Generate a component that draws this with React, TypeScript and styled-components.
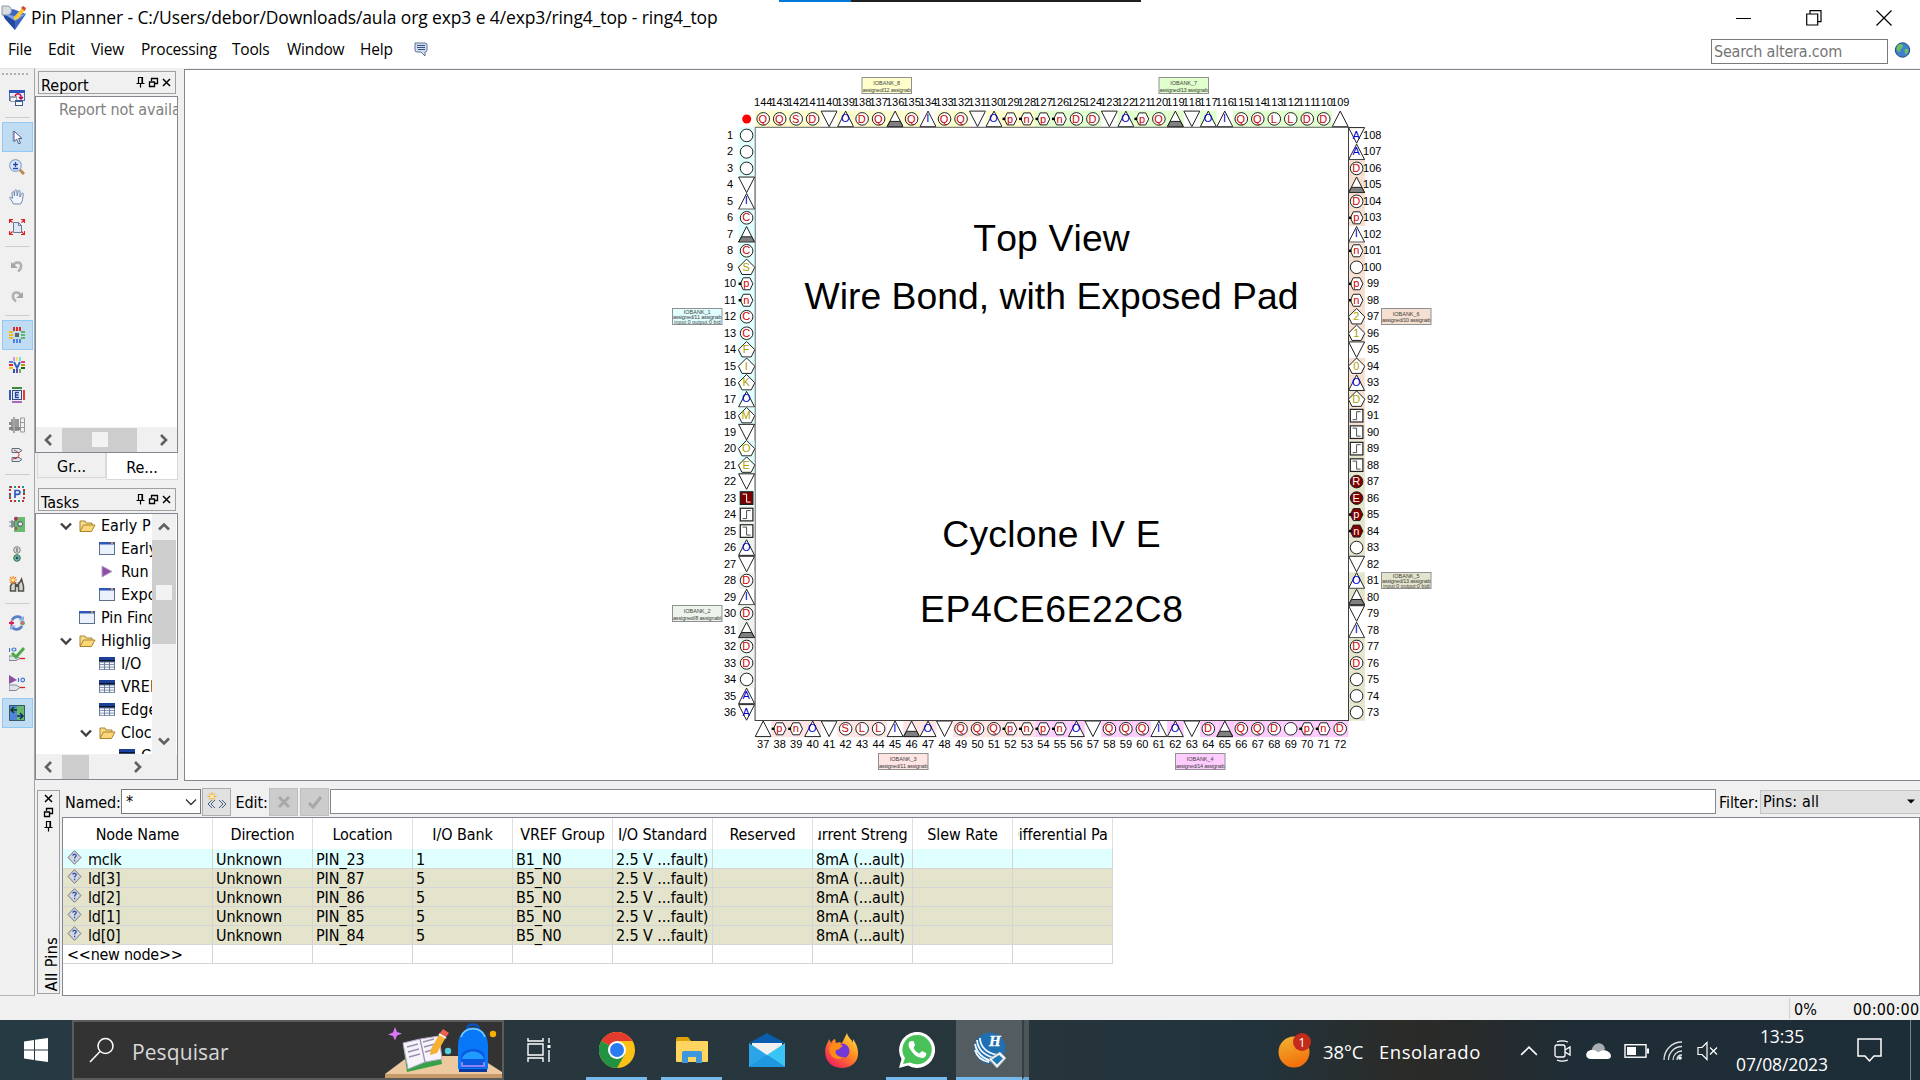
import React from "react";
import styled, { createGlobalStyle, css } from "styled-components";

const Global = createGlobalStyle`
  *, *::before, *::after { box-sizing: border-box; }
  body { margin: 0; background: #fff; overflow: hidden; }
`;

const TAHOMA = `"DejaVu Sans Condensed", "DejaVu Sans", sans-serif`;
const segoe = css`
  font-family: "Open Sans", "Noto Sans", sans-serif;
  font-stretch: normal;
`;

const Screen = styled.div`
  width: 1920px;
  height: 1080px;
  display: flex;
  flex-direction: column;
  background: #fff;
  color: #000;
  font: 16px/19px ${TAHOMA};
  font-stretch: condensed;
  letter-spacing: -0.1px;
  white-space: nowrap;
  overflow: hidden;
`;

/* ---------- title and menu ---------- */
const TopStrip = styled.div`
  height: 2px;
  display: flex;
  padding-left: 779px;
  flex: none;
`;
const StripPart = styled.div<{ $w: number; $c: string }>`
  width: ${(p) => p.$w}px;
  background: ${(p) => p.$c};
`;
const TitleBar = styled.div`
  height: 33px;
  flex: none;
  display: flex;
  align-items: center;
  padding: 0 28px 2px 0;
  ${segoe}
  font-size: 17.5px;
`;
const TitleText = styled.span`
  margin-left: 3px;
  letter-spacing: -0.12px;
  flex: 1;
`;
const WindowControls = styled.div`
  display: flex;
  gap: 54px;
`;
const MenuBar = styled.div`
  height: 33px;
  flex: none;
  display: flex;
  align-items: center;
  padding: 0 9px 5px 8px;
  ${segoe}
  font-size: 15.5px;
  letter-spacing: -0.2px;
`;
const MenuItem = styled.span<{ $w: number }>`
  width: ${(p) => p.$w}px;
  flex: none;
`;
const SearchBox = styled.div`
  margin: 4px 6px 0 auto;
  width: 177px;
  height: 25px;
  border: 1px solid #7a7a7a;
  padding: 2px 2px;
  color: #757575;
  font: 16px/19px ${TAHOMA};
  font-stretch: condensed;
`;

/* ---------- work area ---------- */
const Main = styled.div`
  height: 928px;
  flex: none;
  display: flex;
  background: #f0f0f0;
`;
const Toolbar = styled.div`
  width: 35px;
  border-right: 1px solid #a5a5a5;
  border-bottom: 1px solid #b5b5b5;
  border-top: 1px solid #e4e4e4;
  display: flex;
  flex-direction: column;
  align-items: center;
`;
const Grip = styled.div`
  width: 26px;
  height: 2px;
  margin: 4px 4px 8px 0;
  background: repeating-linear-gradient(90deg, #b0b0b0 0 2px, transparent 2px 4px);
`;
const ToolButton = styled.div<{ $on?: boolean }>`
  width: 31px;
  height: 30px;
  display: grid;
  place-items: center;
  flex: none;
  ${(p) => p.$on && css`
    background: #c0dcf3;
    border: 1px solid #90c8f6;
  `}
`;
const ToolRule = styled.div`
  width: 25px;
  height: 1px;
  background: #cdcdcd;
  margin: 4px 0;
  flex: none;
`;
const Right = styled.div`
  flex: 1;
  min-width: 0;
  display: flex;
  flex-direction: column;
`;
const Upper = styled.div`
  height: 713px;
  flex: none;
  display: flex;
  padding-top: 1px;
`;
const Side = styled.div`
  width: 149px;
  flex: none;
  display: flex;
  flex-direction: column;
`;
const PanelTitle = styled.div`
  width: 138px;
  height: 23px;
  margin: 2px 0 2px 3px;
  border: 1px solid #a0a0a0;
  display: flex;
  align-items: center;
  padding: 0 2px 0 2px;
  flex: none;
`;
const PanelName = styled.span`
  flex: 1;
  padding-top: 5px;
  letter-spacing: 0;
`;
const PanelBox = styled.div<{ $h: number }>`
  width: 143px;
  height: ${(p) => p.$h}px;
  flex: none;
  border: 1px solid #828790;
  background: #fff;
  display: flex;
  flex-direction: column;
  overflow: hidden;
`;
const ReportText = styled.div`
  flex: 1;
  padding: 3px 0 0 23px;
  color: #808080;
  overflow: hidden;
`;
const HScroll = styled.div`
  height: 25px;
  flex: none;
  background: #f0f0f0;
  display: flex;
  align-items: center;
`;
const ArrowCell = styled.div<{ $w: number }>`
  width: ${(p) => p.$w}px;
  display: grid;
  place-items: center;
`;
const HThumb = styled.div<{ $w: number; $gap: number }>`
  width: ${(p) => p.$w}px;
  margin-right: ${(p) => p.$gap}px;
  height: 24px;
  background: #cdcdcd;
  display: grid;
  place-items: center;
`;
const ThumbGrip = styled.div`
  width: 16px;
  height: 15px;
  background: #f2f2f2;
`;
const Tabs = styled.div`
  height: 33px;
  width: 143px;
  flex: none;
  display: flex;
  padding-left: 2px;
`;
const Tab = styled.div<{ $on?: boolean }>`
  width: ${(p) => (p.$on ? 72 : 69)}px;
  height: ${(p) => (p.$on ? 27 : 25)}px;
  background: ${(p) => (p.$on ? "#fff" : "#f0f0f0")};
  border: 1px solid #d9d9d9;
  border-top: 0;
  text-align: center;
  padding-top: ${(p) => (p.$on ? 5 : 4)}px;
`;
const TreeArea = styled.div`
  flex: 1;
  min-height: 0;
  display: flex;
  padding-right: 1px;
`;
const Tree = styled.div`
  flex: 1;
  min-width: 0;
  overflow: hidden;
`;
const TreeRow = styled.div<{ $indent: number }>`
  height: 23px;
  padding-left: ${(p) => p.$indent}px;
  display: flex;
  align-items: center;
  letter-spacing: 0;
`;
const TreeIcon = styled.span<{ $w: number }>`
  width: ${(p) => p.$w}px;
  flex: none;
  display: flex;
`;
const VScroll = styled.div`
  width: 24px;
  flex: none;
  background: #f0f0f0;
  display: flex;
  flex-direction: column;
  align-items: center;
  justify-content: space-between;
`;
const VArrow = styled.div`
  height: 26px;
  display: grid;
  place-items: center;
`;
const VThumb = styled.div`
  width: 24px;
  height: 104px;
  margin-bottom: auto;
  background: #cdcdcd;
  display: grid;
  place-items: center;
`;
const Canvas = styled.div`
  flex: 1;
  border: 1px solid #828790;
  border-right: 0;
  background: #fff;
`;

/* ---------- all pins dock ---------- */
const Dock = styled.div`
  flex: 1;
  display: flex;
  min-height: 0;
`;
const DockTitle = styled.div`
  width: 23px;
  height: 204px;
  margin: 9px 2px 0 2px;
  border: 1px solid #a0a0a0;
  display: flex;
  flex-direction: column;
  align-items: center;
  gap: 1px;
  padding-top: 1px;
  flex: none;
`;
const DockName = styled.span`
  margin: auto 0 2px 6px;
  writing-mode: vertical-rl;
  transform: rotate(180deg);
  line-height: 18px;
  letter-spacing: 0.35px;
`;
const DockBody = styled.div`
  flex: 1;
  min-width: 0;
`;
const EditBar = styled.div`
  height: 36px;
  display: flex;
  align-items: center;
  padding: 5px 0 0 3px;
`;
const BarLabel = styled.span<{ $w: number }>`
  width: ${(p) => p.$w}px;
  flex: none;
  letter-spacing: -0.1px;
  padding-top: 1px;
`;
const Combo = styled.div`
  width: 80px;
  height: 25px;
  border: 1px solid #7a7a7a;
  background: #fff;
  display: flex;
  justify-content: space-between;
  align-items: center;
  padding: 0 2px 0 4px;
  flex: none;
`;
const BarButton = styled.div<{ $off?: boolean; $ml: number }>`
  width: 29px;
  height: 28px;
  margin-left: ${(p) => p.$ml}px;
  border: 1px solid ${(p) => (p.$off ? "#bfbfbf" : "#adadad")};
  background: ${(p) => (p.$off ? "#cccccc" : "#e1e1e1")};
  display: grid;
  place-items: center;
  flex: none;
`;
const EditField = styled.div`
  width: 1386px;
  height: 25px;
  margin: 0 3px 0 1px;
  border: 1px solid #828790;
  background: #fff;
  flex: none;
`;
const FilterCombo = styled.div`
  flex: 1;
  height: 24px;
  background: #e1e1e1;
  border: 1px solid #c4c4c4;
  border-right: 0;
  display: flex;
  align-items: center;
  justify-content: space-between;
  padding: 0 5px 0 2px;
  letter-spacing: 0.1px;
`;
const TableBox = styled.div`
  height: 179px;
  border: 1px solid #828790;
  background: #fff;
`;
const GridRow = styled.div<{ $bg: string; $head?: boolean }>`
  display: grid;
  grid-template-columns: 150px repeat(9, 100px);
  width: 1050px;
  height: ${(p) => (p.$head ? 31 : 19)}px;
  background: ${(p) => p.$bg};
`;
const HeadCell = styled.div`
  border-right: 1px solid #e0e0e0;
  display: flex;
  align-items: center;
  justify-content: center;
  overflow: hidden;
  padding-top: 2px;
`;
const HeadClip = styled.span`
  display: flex;
  justify-content: center;
  width: 89px;
  overflow: hidden;
`;
const Cell = styled.div<{ $first?: boolean }>`
  border-right: 1px solid #d5d5d5;
  border-bottom: 1px solid #d5d5d5;
  padding: 2px 0 0 ${(p) => (p.$first ? 4 : 3)}px;
  line-height: 17px;
  display: flex;
  letter-spacing: ${(p) => (p.$first ? -0.25 : -0.1)}px;
`;
const NodeIcon = styled.span`
  width: 21px;
  height: 15px;
  flex: none;
  margin-top: -1px;
  display: flex;
`;

/* ---------- status and taskbar ---------- */
const Status = styled.div`
  height: 24px;
  flex: none;
  background: #f0f0f0;
  display: flex;
  align-items: center;
  justify-content: flex-end;
`;
const StatusCell = styled.span<{ $w: number; $line?: boolean }>`
  width: ${(p) => p.$w}px;
  padding: 2px 0 0 4px;
  border-left: ${(p) => (p.$line ? "1px solid #d0d0d0" : "0")};
  letter-spacing: ${(p) => (p.$line ? 0 : 0.2)}px;
`;
const Taskbar = styled.div`
  height: 60px;
  flex: none;
  display: flex;
  background: linear-gradient(90deg, #263a44 0, #28363e 500px, #27353c 1000px, #22333c 1260px, #2b2b28 1400px, #282b2b 1470px, #1f2d36 1570px, #1d2d37 100%);
  color: #fff;
  ${segoe}
`;
const StartCell = styled.div`
  width: 72px;
  display: grid;
  place-items: center;
`;
const TaskSearch = styled.div`
  width: 432px;
  height: 60px;
  background: #333;
  border: 2px solid #5b5b5b;
  display: flex;
  align-items: center;
  padding-left: 15px;
  color: #d8d8d8;
  font-size: 21px;
  letter-spacing: 0.1px;
`;
const SearchLabel = styled.span`
  margin-left: 17px;
  flex: 1;
  padding-top: 4px;
`;
const AppCell = styled.div<{ $w: number; $ml?: number; $run?: boolean; $active?: boolean }>`
  width: ${(p) => p.$w}px;
  margin-left: ${(p) => p.$ml ?? 0}px;
  height: 60px;
  display: grid;
  place-items: center;
  border-bottom: 3px solid ${(p) => (p.$run ? "#76b9ed" : "transparent")};
  padding-top: 3px;
  background: ${(p) => (p.$active ? "#535c61" : "transparent")};
`;
const StackEdge = styled.div`
  width: 7px;
  height: 60px;
  border-left: 2px solid #353e43;
  background: #4b555a;
  border-bottom: 3px solid #6ba6d4;
`;
const Weather = styled.div`
  margin-left: 248px;
  width: 242px;
  display: flex;
  align-items: center;
  font-size: 18.5px;
  padding-top: 2px;
`;
const WeatherText = styled.span<{ $w: number; $ml?: number; $ls?: number }>`
  width: ${(p) => p.$w}px;
  margin-left: ${(p) => p.$ml ?? 0}px;
  letter-spacing: ${(p) => p.$ls ?? -0.1}px;
`;
const Tray = styled.div`
  width: 201px;
  margin-left: -1px;
  display: flex;
  align-items: center;
  justify-content: space-between;
  padding-top: 2px;
`;
const Clock = styled.div`
  margin-left: 14px;
  width: 98px;
  text-align: center;
  font-size: 17.5px;
  line-height: 28px;
  padding-top: 2px;
`;
const Notice = styled.div`
  margin-left: 22px;
  width: 58px;
  border-right: 1px solid #78828a;
  display: flex;
  align-items: center;
  padding: 0 0 0 4px;
`;

/* ---------- small glyphs ---------- */
const Pin = () => (
  <svg width="13" height="13" viewBox="0 0 13 13" fill="none" stroke="#000" strokeWidth="1.2">
    <path d="M4.500 1.500h4v6h-4zM2.500 7.500h8M6.500 7.500v4M8 1.500v6" />
  </svg>
);
const Restore = () => (
  <svg width="13" height="13" viewBox="0 0 13 13" fill="none" stroke="#000" strokeWidth="1.3">
    <path d="M4.500 5V2.500h6v5H8M4 2.500h7M2.500 6h5v4.500h-5zM2 6h6" />
  </svg>
);
const Cross = () => (
  <svg width="13" height="13" viewBox="0 0 13 13" fill="none" stroke="#000" strokeWidth="1.5">
    <path d="M3 3l7 7M10 3l-7 7" />
  </svg>
);
const Chevron = ({ dir, size = 14, w = 2.6, c = "#606060" }: { dir: "l" | "r" | "u" | "d"; size?: number; w?: number; c?: string }) => {
  const d = { l: "M9 2L4 7l5 5", r: "M5 2l5 5-5 5", u: "M2 9.500l5-5 5 5", d: "M2 4.500l5 5 5-5" }[dir];
  return (
    <svg width={size} height={size} viewBox="0 0 14 14" fill="none" stroke={c} strokeWidth={w}>
      <path d={d} />
    </svg>
  );
};
const Folder = () => (
  <svg width="17" height="14" viewBox="0 0 17 14">
    <path d="M1 12V2h5l1 2h6v3" fill="#f7dc8c" stroke="#a8832c" />
    <path d="M1 12.500L4.500 6H16l-3.500 6.500z" fill="#fbd77a" stroke="#a8832c" />
  </svg>
);
const WindowIcon = () => (
  <svg width="17" height="14" viewBox="0 0 17 14">
    <rect x=".5" y=".5" width="15" height="12" fill="#eaf1fb" stroke="#5f6f8e" />
    <rect x="0" y="0" width="16" height="2.500" fill="#2e58b8" />
    <rect x="12" y="0" width="2" height="2" fill="#e89020" />
  </svg>
);
const TableIcon = () => (
  <svg width="17" height="14" viewBox="0 0 17 14">
    <rect width="16" height="13" fill="#6e7f9e" />
    <rect width="16" height="4" fill="#1c3f98" />
    <rect y="3" width="16" height="1.500" fill="#071433" />
    {[5.5, 8, 10.5].map((y) => [1, 6, 11].map((x) => <rect key={`${x}-${y}`} x={x} y={y} width="4" height="1.700" fill="#f2f6fc" />))}
  </svg>
);
const PlayIcon = () => (
  <svg width="17" height="14" viewBox="0 0 17 14">
    <path d="M3 1l10 5.500L3 12z" fill="#8c4fa8" stroke="#b9a3c4" />
  </svg>
);
const NodeGlyph = () => (
  <svg width="15" height="15" viewBox="0 0 15 15">
    <path d="M7.500 .7l6.500 6.800-6.500 6.800L1 7.500z" fill="#d4d8de" stroke="#70757f" />
    <path d="M5.800 5.600c.3-1.900 3.600-1.700 3.400.2-.1 1-1.600 1.200-1.600 2.700M7.600 9.800v1.400" stroke="#2f4fb0" strokeWidth="1.300" fill="none" />
  </svg>
);

const R = (x: number, y: number, w: number, h: number, f: string) => <rect key={`${x},${y},${f}`} x={x} y={y} width={w} height={h} fill={f} />;
const Tool = ({ children }: { children: React.ReactNode }) => (
  <svg width="16" height="16" viewBox="0 0 16 16" fill="none">{children}</svg>
);
const toolIcons: Record<string, React.ReactNode> = {
  tasks: (<Tool><rect x=".5" y=".5" width="15" height="10" fill="#e8edf8" stroke="#4a6cc0" />{R(0, 0, 16, 3, "#2a55c0")}{R(1, 6, 7, 6, "#98a0ac")}{R(2, 8, 5, 3, "#f4f4f4")}{R(6, 10, 8, 6, "#3a5a98")}{R(7, 12, 6, 3, "#fff")}<path d="M6 6c1-3 5-3 6 0v3M10 7l2 2 2-2" stroke="#c00040" strokeWidth="1.400" /></Tool>),
  cursor: (<Tool><path d="M3 1l10 8H9l2.500 5-2 1L7 10l-4 3z" fill="#9fb2d2" opacity=".6" /><path d="M5 2l8 7.500H9.500l2 4.500-1.800.8-2-4.600L5 12.500z" fill="#fff" stroke="#3a4a78" strokeWidth=".9" /></Tool>),
  zoom: (<Tool><circle cx="6.500" cy="6.500" r="5.800" fill="#dbe9f8" stroke="#8da6c8" strokeWidth="1.200" /><path d="M6.500 3v5M4 5.500h5M4 9.500h5" stroke="#2448b0" strokeWidth="1.300" /><path d="M11 11l4 4" stroke="#b98a50" strokeWidth="3" /></Tool>),
  hand: (<Tool><path d="M4.500 15c-1-3-4-5.500-3.800-6.500.8-1 2 .2 2.800 1L3 3.500c.5-1.200 1.700-1 2 0L5.500 7l.3-5.500c.5-1.200 1.800-1 2 0L8.200 7l1-5c.6-1 1.800-.8 1.900.3L10.800 8l1.800-3.500c.8-.9 1.900-.3 1.700.7C13.500 9 14 12 11.500 15z" fill="#f0f5fc" stroke="#7288ac" /></Tool>),
  fit: (<Tool><path d="M4.500 3.500h5l3 3v7h-8z" fill="#dfe8f4" stroke="#66799c" /><path d="M9.500 3.500v3h3" stroke="#66799c" /><path d="M.5 4V.5H4M12 .5h3.500V4M15.500 12v3.500H12M4 15.500H.5V12M1 1l2.500 2.500M15 1l-2.500 2.500M1 15l2.500-2.500M15 15l-2.500-2.500" stroke="#e02020" strokeWidth="1.200" /></Tool>),
  undo: (<Tool><path d="M4 8.500C5 4 11 3 12 7c.5 3-1 5-3 6.500" stroke="#b0b0b0" strokeWidth="2.600" /><path d="M2 4v6h7z" fill="#a6a6a6" /></Tool>),
  redo: (<Tool><path d="M12 8.500C11 4 5 3 4 7c-.5 3 1 5 3 6.500" stroke="#b0b0b0" strokeWidth="2.600" /><path d="M14 4v6H7z" fill="#a6a6a6" /></Tool>),
  chip: (<Tool>{[4, 7, 10].map((x) => R(x, 0, 2, 4, "#e02828"))}{[4, 7, 10].map((x) => R(x, 12, 2, 4, "#5080e0"))}{[4, 7, 10].map((y) => R(0, y, 4, 2, "#f8b818"))}{[4, 7, 10].map((y) => R(12, y, 4, 2, "#60b860"))}{R(6, 6, 4, 4, "#606468")}</Tool>),
  vref: (<Tool>{R(4, 0, 2, 4, "#d098e0")}{R(7, 0, 2, 4, "#f8e060")}{R(10, 0, 2, 4, "#70e0e0")}{R(0, 4, 4, 2, "#5080e0")}{R(0, 7, 4, 2, "#e02828")}{R(0, 10, 4, 2, "#f8b818")}{R(12, 4, 4, 2, "#e04080")}{R(12, 7, 4, 2, "#b0a010")}{R(12, 10, 4, 2, "#206020")}{R(4, 12, 2, 4, "#3050b0")}{R(7, 12, 2, 4, "#8040a0")}{R(10, 12, 2, 4, "#60b860")}<path d="M5 5l3 6 3-6" stroke="#2c5bc0" strokeWidth="1.800" /></Tool>),
  edge: (<Tool>{R(3, 0, 10, 2, "#3c8a3c")}{R(3, 14, 10, 2, "#a868c0")}{R(0, 3, 2, 10, "#3858b8")}{R(14, 3, 2, 10, "#f03838")}<rect x="3.500" y="3.500" width="9" height="9" fill="#e4ecf8" stroke="#30507e" /><path d="M10 5.500H6.500v5H10M6.500 8h3" stroke="#2848a0" strokeWidth="1.300" /></Tool>),
  dqs: (<Tool>{R(2, 2, 8, 12, "#9a9a9a")}{R(0, 5, 3, 3, "#8c8c8c")}{R(0, 10, 11, 3, "#858585")}{R(4, 0, 2, 16, "#a5a5a5")}<path d="M11.500 1h4v14h-4zM11.500 5.500h4M11.500 10.500h4" stroke="#9a9a9a" /></Tool>),
  swap: (<Tool><path d="M3 1.500h7l3 2-3 2H3zM3 10.500h7l3 2-3 2H3z" fill="#dce4ec" stroke="#5f6f82" /><path d="M5 3c4 2 5 3 5 5s-2 2-4 4M4 12l4-1" stroke="#e02828" /></Tool>),
  pfind: (<Tool><rect x="1" y="1" width="14" height="14" stroke="#c03030" strokeWidth="2" strokeDasharray="2 2" /><path d="M0 1h1M5 1h2M13 1h2M1 9v2M15 5v2M9 15h2" stroke="#209090" strokeWidth="2" /><path d="M6 12V4.500h3c2.500 0 2.500 3.800 0 3.800H6" stroke="#2c5bc0" strokeWidth="1.700" /></Tool>),
  ports: (<Tool>{R(5, 1, 11, 15, "#6cb86c")}<path d="M0 6h6M0 10h6M2 8h4" stroke="#708090" /><path d="M9 6h3c2 0 2 4 0 4H9z" fill="#e8eef4" stroke="#405060" /><path d="M7 5V2M5.500 3.500L7 1.500l1.500 2M7 11v3" stroke="#c02060" strokeWidth="1.400" /><path d="M3 4v8M5 5v6" stroke="#606870" /></Tool>),
  info: (<Tool><circle cx="8" cy="4" r="3.300" fill="#dcdcdc" stroke="#808080" /><path d="M8 2v4" stroke="#707070" strokeWidth="1.300" /><circle cx="8" cy="12" r="3.300" fill="#70b890" stroke="#307850" /><circle cx="8" cy="12" r="1.300" fill="#204890" /></Tool>),
  find: (<Tool><path d="M1.500 15v-5l2-3h3v8zM14.500 15v-5l-2-7-2 4h-1v8z" fill="#d4d4d0" stroke="#50504c" strokeWidth="1.500" /><path d="M6 8h4v3H6z" fill="#50504c" /><path d="M4 0v8M0 4h8M1 1l6 6M7 1L1 7" stroke="#f0802c" strokeWidth="1.200" /><circle cx="4" cy="4" r="1.700" fill="#fff080" /></Tool>),
  sync: (<Tool><path d="M3 5c3-5 9-4 10.500 0M13 11c-3 5-9 4-10.500 0" stroke="#5a80c8" strokeWidth="2.600" /><path d="M9 5.500h6V1zM7 10.500H1V15z" fill="#8fb0e8" /><path d="M2.500 5.500v5M0 8h5" stroke="#d82058" strokeWidth="1.800" /><circle cx="13.500" cy="8" r="2" fill="#e86090" stroke="#60b060" /></Tool>),
  check: (<Tool><path d="M.5 3v4M3 4.500c0-2 4-2 4 0s-4 2-4 0" stroke="#3878d0" strokeWidth="1.200" /><path d="M0 11h7l4 2.500-4 2H0zM11 13.500h5" fill="#e0e4ea" stroke="#808890" /><path d="M11 13.500h5" stroke="#e02020" strokeWidth="1.300" /><path d="M3 8l4 4 8-9" stroke="#50a848" strokeWidth="3" /></Tool>),
  runio: (<Tool><path d="M0 0l8 5-8 4z" fill="#8c50a0" /><path d="M9.500 3v4M12 5c0-2.500 3.500-2.500 3.500 0s-3.500 2.500-3.500 0" stroke="#3878d0" strokeWidth="1.200" /><path d="M0 10h7l4 2.500-4 3H0z" fill="#e0e4ea" stroke="#808890" /><path d="M11 12.500h5" stroke="#e02020" strokeWidth="1.300" /></Tool>),
  back: (<Tool>{R(0, 0, 8, 16, "#4f86dc")}{R(8, 0, 8, 16, "#68b868")}<path d="M.5.5h15v15H.5z" stroke="#38586c" /><path d="M2 5h6M5 2L2 5l3 3" stroke="#103c10" strokeWidth="1.500" /><path d="M8 11h6M11 8l3 3-3 3" stroke="#102c70" strokeWidth="1.500" /></Tool>),
};

/* ---------- chip package ---------- */
const BANK: Record<number, string> = { 0: "none", 1: "#e0ffff", 2: "#ebf3eb", 3: "#ffe4e4", 4: "#ffccff", 5: "#e4e4cc", 6: "#f5dfd0", 7: "#e0ffcc", 8: "#ffffcc" };
const P = 16.486;
// Kinds: c circle, h hexagon, d pentagon, u/v power triangles, g ground triangle, w bare triangle, s/z clock squares; a trailing * marks an assigned pin.
const LEFT = "c c c v uI cC g cC dS hp hn cC cC dF dI dK uO dM v dO dE v z* s z uO v cD uI cD g cD cD c uA vA".split(" ");
const BOTTOM = "w hp hn uO v cS cL cL uI g uO v cQ cQ cQ hp hn hp hn uO v cQ cQ cQ uI uO v cD g cQ cQ cD c hp hn cD".split(" ");
const RIGHT = "vA uA cD g cD hp uI hn c hp hn d2 d1 v d0 uO dD s z s z cR* cE* hp* hn* c v uO g v uI cD cD c c c".split(" ");
const TOP = "cQ cQ cS cD v uO cD cQ g cQ uI cQ cQ v uO hp hn hp hn cD cD v uO hp cQ g v uO uI cQ cQ cL cL cD cD w".split(" ");

const bankOf = (pin: number, code: string) => {
  const k = code[0];
  if (k === "v" || k === "w" || (k === "u" && code[1] !== "O")) return 0;
  if (pin <= 23) return 1;
  if (pin <= 36) return 2;
  if (pin <= 53) return 3;
  if (pin <= 72) return 4;
  if (pin <= 89) return 5;
  if (pin <= 108) return 6;
  return pin <= 127 ? 7 : 8;
};

const PinMark = ({ x, y, code, pin }: { x: number; y: number; code: string; pin: number }) => {
  const k = code[0];
  const full = code.endsWith("*");
  const letter = code.slice(1).replace("*", "");
  const fill = full ? "#800000" : "#fff";
  const ink = full ? "#fff" : k === "d" ? "#b0a000" : k === "u" || k === "v" ? "#0000d8" : "#d00000";
  const s = { fill, stroke: "#202020", strokeWidth: 1 };
  return (
    <g transform={`translate(${x} ${y})`}>
      <rect x={-P / 2} y={-P / 2} width={P + 0.05} height={P + 0.05} fill={BANK[bankOf(pin, code)]} />
      {k === "c" && <circle r="6.300" {...s} />}
      {k === "h" && <><path d="M-3.300 -6h6.600l3 6-3 6h-6.600l-3-6z" {...s} /><path d="M-8 0h3" stroke="#000" strokeWidth="2.400" /></>}
      {k === "d" && <path d="M0 -8.200L8.200 0L4.600 7.200H-4.600L-8.200 0z" {...s} />}
      {(k === "u" || k === "w") && <path d="M0 -7.800L8 7.800H-8z" {...s} />}
      {k === "v" && <path d="M0 7.800L8 -7.800H-8z" {...s} />}
      {k === "g" && <><path d="M0 -7.800L8 7.800H-8z" {...s} /><path d="M-5 2.500H5L8 7.800H-8z" fill="#808080" stroke="#202020" /></>}
      {(k === "s" || k === "z") && (
        <>
          <rect x="-6.300" y="-6.300" width="12.600" height="12.600" {...s} strokeWidth="1.200" />
          <path d={k === "s" ? "M-4 4H0V-4H4" : "M-4 -4H0V4H4"} fill="none" stroke={full ? "#fff" : "#505050"} />
        </>
      )}
      {letter && <text x="-0.400" y={k === "u" ? 3 : 3.6} textAnchor="middle" fontSize="11" fill={ink}>{letter}</text>}
    </g>
  );
};

const banks = [
  { n: 8, x: 862, y: 77.5, a: "assigned/12 assignab" },
  { n: 7, x: 1159, y: 77.5, a: "assigned/13 assignab" },
  { n: 1, x: 672.5, y: 308.5, a: "assigned/11 assignab", b: "input:0 output:0 bid" },
  { n: 2, x: 672.5, y: 605.5, a: "assigned/8 assignabl" },
  { n: 3, x: 878.5, y: 753.5, a: "assigned/11 assignab" },
  { n: 4, x: 1175.5, y: 753.5, a: "assigned/14 assignab" },
  { n: 5, x: 1381.5, y: 572.5, a: "assigned/13 assignab", b: "input:0 output:0 bidi" },
  { n: 6, x: 1381.5, y: 308.5, a: "assigned/10 assignab" },
];

const PackageSvg = styled.svg`
  display: block;
  font-family: "Liberation Sans", Arial, sans-serif;
  font-stretch: normal;
  font-kerning: none;
  letter-spacing: 0;
`;

const Package = () => {
  const first = 763.2;
  const top = 135.4;
  return (
    <PackageSvg width="1734" height="710" viewBox="185 70 1734 710">
      <rect x="755" y="127.500" width="593.500" height="593" fill="#fff" stroke="#808080" />
      <circle cx="746.700" cy="119" r="4.500" fill="#f00" />
      {TOP.map((c, i) => <PinMark key={i} x={first + i * P} y={118.9} code={c} pin={144 - i} />)}
      {LEFT.map((c, i) => <PinMark key={i} x={746.6} y={top + i * P} code={c} pin={i + 1} />)}
      {BOTTOM.map((c, i) => <PinMark key={i} x={first + i * P} y={728.8} code={c} pin={37 + i} />)}
      {RIGHT.map((c, i) => <PinMark key={i} x={1356.6} y={top + i * P} code={c} pin={108 - i} />)}
      <g fontSize="11" fill="#000" textAnchor="middle">
        {TOP.map((_, i) => <text key={i} x={first + i * P} y="106.300">{144 - i}</text>)}
        {LEFT.map((_, i) => <text key={i} x={730} y={top + i * P + 3.6}>{i + 1}</text>)}
        {BOTTOM.map((_, i) => <text key={i} x={first + i * P} y="748">{37 + i}</text>)}
        {RIGHT.map((_, i) => <text key={i} x={i < 9 ? 1372.3 : 1373} y={top + i * P + 3.6}>{108 - i}</text>)}
      </g>
      <path d="M755.300 127V721M755 127.300H1348.700" stroke="#6a6a6a" strokeOpacity=".5" strokeWidth="1.500" />
      <path d="M1348.500 127V721M755 720.500H1349" stroke="#404040" />
      <g fontSize="37.300" fill="#000" textAnchor="middle">
        <text x="1051.500" y="251" textLength="156.500">Top View</text>
        <text x="1051.500" y="309" textLength="494">Wire Bond, with Exposed Pad</text>
        <text x="1051.500" y="547" textLength="218.500">Cyclone IV E</text>
        <text x="1051.500" y="622" textLength="263">EP4CE6E22C8</text>
      </g>
      {banks.map((k) => (
        <g key={k.n} textAnchor="middle" fill="#404040">
          <rect x={k.x} y={k.y} width="49.500" height="16" fill={BANK[k.n]} stroke="#909090" />
          <text x={k.x + 24.7} y={k.y + (k.b ? 5 : 7)} fontSize="5.500">IOBANK_{k.n}</text>
          <text x={k.x + 24.7} y={k.y + (k.b ? 10.4 : k.n === 6 ? 13 : 14.4)} fontSize="5.500" textLength="48.500">{k.a}</text>
          {k.b && <text x={k.x + 25} y={k.y + 15.4} fontSize="5.200" textLength="46.500">{k.b}</text>}
        </g>
      ))}
    </PackageSvg>
  );
};

/* ---------- taskbar art ---------- */
const StudyArt = () => (
  <svg width="117" height="56" viewBox="0 0 117 56">
    <path d="M0 52L24 34H92L117 50V56H0z" fill="#edc9a0" />
    <path d="M0 52H117V56H0z" fill="#c59a68" />
    <path d="M10 5l2 5 5 1.500-5 2-2 5-2-4.500-5-1.500 5-2z" fill="#d878f8" />
    <path d="M18 23l4 27 35-8-5-26z" fill="#38a048" />
    <path d="M18 21l17-4 19-3 3 23-17 3-17 7z" fill="#f6f3fa" stroke="#b4a8c8" />
    <path d="M35 17l5 23M22 25l11-3M23 30l11-3M24 35l11-3M38 20l11-3M39 25l11-3M40 30l11-3" stroke="#9a8fb0" strokeWidth="1.300" />
    <path d="M46 27l9-16 6 4-9 16-7 2z" fill="#f8b030" /><path d="M55 11l3-4 6 4-3 4z" fill="#f06050" /><path d="M54 12l7 4" stroke="#f0f0f0" strokeWidth="2" />
    <circle cx="63" cy="29" r="3.200" fill="#50d0e0" /><circle cx="108" cy="12" r="3.200" fill="#f8b000" />
    <path d="M82 7c0-6 12-6 12 0" stroke="#0a50b8" strokeWidth="2.500" fill="none" />
    <path d="M73 24c0-25 30-25 30 0v22c0 5-30 5-30 0z" fill="#0878f8" />
    <path d="M76 15c4-11 20-11 24 0" stroke="#80d0ff" strokeWidth="1.500" fill="none" />
    <path d="M76 46V36c0-12 24-12 24 0v10z" fill="#0a58e0" /><path d="M77 37c2-10 20-10 22 0" fill="#209cff" />
    <path d="M77 40v4h22v-4" stroke="#b890f8" strokeWidth="1.600" fill="none" /><path d="M74 47h28v3H74z" fill="#0838a0" />
  </svg>
);
const Chrome = () => (
  <svg width="36" height="36" viewBox="0 0 36 36">
    <circle cx="18" cy="18" r="18" fill="#fbc116" />
    <path d="M18 18L2.400 9A18 18 0 0 1 33.600 9H18z" fill="#e33b2e" />
    <path d="M18 18L2.400 9A18 18 0 0 0 18 36l7.800-13.500z" fill="#229342" />
    <circle cx="18" cy="18" r="9" fill="#fff" /><circle cx="18" cy="18" r="7" fill="#2b7bf0" />
  </svg>
);
const Explorer = () => (
  <svg width="32" height="27" viewBox="0 0 32 27">
    <path d="M0 2q0-2 2-2h10l3 4H0z" fill="#e0a008" /><rect y="4" width="32" height="21" rx="1" fill="#ffd560" />
    <path d="M6 26V16q0-2 2-2h16q2 0 2 2v10h-6v-6h-8v6z" fill="#3e96dc" />
  </svg>
);
const Mail = () => (
  <svg width="36" height="34" viewBox="0 0 36 34">
    <path d="M0 10L18 0l18 10z" fill="#0a5cae" /><path d="M3 10h30v8L18 24 3 18z" fill="#f0f0f0" />
    <path d="M0 10l18 12L36 34H0z" fill="#2ba4e8" /><path d="M36 10v24L18 22z" fill="#38c4f4" /><path d="M0 34h36L18 22z" fill="#2098e0" />
  </svg>
);
const Firefox = () => (
  <svg width="34" height="35" viewBox="0 0 34 35">
    <defs><linearGradient id="fx" x1="1" y1="0" x2="0.200" y2="1"><stop offset="0" stopColor="#fff44f" /><stop offset=".45" stopColor="#ff9020" /><stop offset="1" stopColor="#f01860" /></linearGradient></defs>
    <path d="M22 0c1 5 5 6 6 10V6c8 10 8 28-11 29C0 35-3 18 3 9l1-3 2 4c1-2 3-4 4-4l1 4c3-1 4-1 6 0z" fill="url(#fx)" />
    <circle cx="17" cy="18" r="7.500" fill="#7038d8" />
    <path d="M5 13c4-4 9-3 13 0-3 1-3 4-7 4-2 4 3 8 9 7-9 6-18-2-15-11z" fill="#ff8a18" />
  </svg>
);
const WhatsApp = () => (
  <svg width="36" height="36" viewBox="0 0 36 36">
    <path d="M0 36l2.500-9A18 18 0 1 1 9 33.500z" fill="#fff" />
    <path d="M4 32l2-6A14.700 14.700 0 1 1 11 30.500z" fill="#48c258" />
    <path d="M12 9c-3 1-3 5-1 8 3 5 7 9 13 9 3-1 4-4 3-5l-4-2-2.500 2.500c-3-1-5-3.500-6-5.500L16 13l-1.500-4z" fill="#fff" />
  </svg>
);
const Quartus = () => (
  <svg width="35" height="36" viewBox="0 0 35 36">
    <circle cx="18" cy="16" r="15.500" fill="#1e70b2" />
    <path d="M8 6c0 9 7 15 17 17M5 8c1 11 9 16 18 18M3 12c2 10 9 15 17 17M3 18c2 7 8 11 14 12" stroke="#f2f7fb" strokeWidth="1.800" fill="none" />
    <text x="17" y="14" fontFamily="Liberation Serif, serif" fontStyle="italic" fontWeight="700" fontSize="15" fill="#fff" stroke="#fff" strokeWidth=".4">H</text>
    <path d="M17 27l11-7 6 6-9 10z" fill="#f4f4f4" stroke="#b0b0b0" /><path d="M20 27.500l7-4.500 4 3.500-6 6z" fill="#1d78b8" />
  </svg>
);

const headers = ["Node Name", "Direction", "Location", "I/O Bank", "VREF Group", "I/O Standard", "Reserved", "Current Strength", "Slew Rate", "Differential Pair"];
const nodes = [
  { name: "mclk", pin: "PIN_23", bank: "1", vref: "B1_N0" },
  { name: "ld[3]", pin: "PIN_87", bank: "5", vref: "B5_N0" },
  { name: "ld[2]", pin: "PIN_86", bank: "5", vref: "B5_N0" },
  { name: "ld[1]", pin: "PIN_85", bank: "5", vref: "B5_N0" },
  { name: "ld[0]", pin: "PIN_84", bank: "5", vref: "B5_N0" },
];
const tree: { indent: number; open?: boolean; icon: React.ReactNode; label: string }[] = [
  { indent: 23, open: true, icon: <Folder />, label: "Early P" },
  { indent: 63, icon: <WindowIcon />, label: "Early" },
  { indent: 63, icon: <PlayIcon />, label: "Run" },
  { indent: 63, icon: <WindowIcon />, label: "Expo" },
  { indent: 43, icon: <WindowIcon />, label: "Pin Find" },
  { indent: 23, open: true, icon: <Folder />, label: "Highlig" },
  { indent: 63, icon: <TableIcon />, label: "I/O" },
  { indent: 63, icon: <TableIcon />, label: "VREF" },
  { indent: 63, icon: <TableIcon />, label: "Edge" },
  { indent: 43, open: true, icon: <Folder />, label: "Cloc" },
  { indent: 83, icon: <TableIcon />, label: "C" },
];
const menus: [string, number][] = [["File", 40], ["Edit", 43], ["View", 50], ["Processing", 91], ["Tools", 55], ["Window", 73], ["Help", 53]];
const tools = ["tasks", "|", "cursor*", "zoom", "hand", "fit", "|", "undo", "redo", "|", "chip*", "vref", "edge", "dqs", "swap", "|", "pfind", "ports", "info", "find", "|", "sync", "check", "runio", "back*"];

const PanelHead = ({ name }: { name: string }) => (
  <PanelTitle><PanelName>{name}</PanelName><Pin /><Restore /><Cross /></PanelTitle>
);

export default function App() {
  return (
    <Screen>
      <Global />
      <TopStrip><StripPart $w={72} $c="#0078d7" /><StripPart $w={290} $c="#1f1f1f" /></TopStrip>
      <TitleBar>
        <svg width="28" height="26" viewBox="0 0 28 26">
          <path d="M2 8l11-4 13 5-11 16z" fill="#3b66c4" /><path d="M2 8l12 3 12-2-11 7z" fill="#7fa4e8" /><path d="M2 8l13 8v9L5 14z" fill="#2448a0" />
          <path d="M2 1h5c6 0 6 9 0 9H2z" fill="#d8dce4" stroke="#8c94a4" /><path d="M14 12l8-9 3 2-7 9-4 1z" fill="#f8c838" /><path d="M21 3l2-2 3 2-1 3z" fill="#d04838" />
        </svg>
        <TitleText>Pin Planner - C:/Users/debor/Downloads/aula org exp3 e 4/exp3/ring4_top - ring4_top</TitleText>
        <WindowControls>
          <svg width="16" height="16" viewBox="0 0 16 16"><path d="M0 8.500h15" stroke="#000" /></svg>
          <svg width="16" height="16" viewBox="0 0 16 16" fill="none" stroke="#000" strokeWidth="1.200"><path d="M.7 4h11v11H.7zM4 4V.7h11v11h-3.500" /></svg>
          <svg width="16" height="16" viewBox="0 0 16 16"><path d="M.5.5l15 15M15.500.5l-15 15" stroke="#000" strokeWidth="1.200" /></svg>
        </WindowControls>
      </TitleBar>
      <MenuBar>
        {menus.map(([m, w]) => <MenuItem key={m} $w={w}>{m}</MenuItem>)}
        <svg width="16" height="15" viewBox="0 0 16 15"><path d="M2 1h10q2 0 2 2v5q0 2-2 2v4L8 10H4q-2 0-2-2z" fill="#d0def4" stroke="#5f7398" /><path d="M4 3.500h8M4 5.500h8M5 7.500h7" stroke="#3a5080" /></svg>
        <SearchBox>Search altera.com</SearchBox>
        <svg width="17" height="17" viewBox="0 0 17 17"><circle cx="8.500" cy="9" r="7.200" fill="#3f7fd0" stroke="#1f4880" /><path d="M4 4c3-2 5-1 5 1S6 8 6 10s-2 1-3-1 0-4 1-5zM11 8c3-1 4 1 3 3s-3 3-3 1-1-3 0-4z" fill="#6fc05c" /></svg>
      </MenuBar>

      <Main>
        <Toolbar>
          <Grip />
          {tools.map((t, i) => {
            if (t === "|") return <ToolRule key={i} />;
            return <ToolButton key={i} $on={t.endsWith("*")}>{toolIcons[t.replace("*", "")]}</ToolButton>;
          })}
        </Toolbar>
        <Right>
          <Upper>
            <Side>
              <PanelHead name="Report" />
              <PanelBox $h={357}>
                <ReportText>Report not availa</ReportText>
                <HScroll>
                  <ArrowCell $w={26}><Chevron dir="l" /></ArrowCell>
                  <HThumb $w={75} $gap={13}><ThumbGrip /></HThumb>
                  <ArrowCell $w={26}><Chevron dir="r" /></ArrowCell>
                </HScroll>
              </PanelBox>
              <Tabs><Tab>Gr...</Tab><Tab $on>Re...</Tab></Tabs>
              <PanelHead name="Tasks" />
              <PanelBox $h={267}>
                <TreeArea>
                  <Tree>
                    {tree.map((t, i) => (
                      <TreeRow key={i} $indent={t.indent}>
                        {t.open && <TreeIcon $w={20}><Chevron dir="d" c="#404040" w={2.4} /></TreeIcon>}
                        <TreeIcon $w={22}>{t.icon}</TreeIcon>
                        {t.label}
                      </TreeRow>
                    ))}
                  </Tree>
                  <VScroll>
                    <VArrow><Chevron dir="u" /></VArrow>
                    <VThumb><ThumbGrip /></VThumb>
                    <VArrow><Chevron dir="d" /></VArrow>
                  </VScroll>
                </TreeArea>
                <HScroll>
                  <ArrowCell $w={26}><Chevron dir="l" /></ArrowCell>
                  <HThumb $w={27} $gap={35} />
                  <ArrowCell $w={26}><Chevron dir="r" /></ArrowCell>
                </HScroll>
              </PanelBox>
            </Side>
            <Canvas><Package /></Canvas>
          </Upper>

          <Dock>
            <DockTitle><Cross /><Restore /><Pin /><DockName>All Pins</DockName></DockTitle>
            <DockBody>
              <EditBar>
                <BarLabel $w={56}>Named:</BarLabel>
                <Combo><span>*</span><Chevron dir="d" w={1.3} c="#333" /></Combo>
                <BarButton $ml={1}>
                  <svg width="20" height="20" viewBox="0 0 20 20" fill="none"><path d="M8 8l-4 4 4 4M5 8l-4 4 4 4M12 8l4 4-4 4M15 8l4 4-4 4" stroke="#3f5a80" /><path d="M5 0v9M.5 4.500h9M2 1.500l6 6M8 1.500l-6 6" stroke="#f0a820" /><circle cx="5" cy="4.500" r="1.800" fill="#fff3a0" /></svg>
                </BarButton>
                <BarLabel $w={38}>&nbsp;Edit:</BarLabel>
                <BarButton $off $ml={0}><svg width="16" height="16" viewBox="0 0 16 16"><path d="M3 3l10 10M13 3L3 13" stroke="#a8a8a8" strokeWidth="3" /></svg></BarButton>
                <BarButton $off $ml={2}><svg width="16" height="16" viewBox="0 0 16 16" fill="none"><path d="M2 9l4 4 8-10" stroke="#a8a8a8" strokeWidth="3" /></svg></BarButton>
                <EditField />
                <BarLabel $w={41}>Filter:</BarLabel>
                <FilterCombo><span>Pins: all</span><svg width="8" height="5" viewBox="0 0 8 5"><path d="M0 .5h8L4 4.500z" fill="#000" /></svg></FilterCombo>
              </EditBar>
              <TableBox>
                <GridRow $head $bg="#fff">{headers.map((h) => <HeadCell key={h}><HeadClip>{h}</HeadClip></HeadCell>)}</GridRow>
                {nodes.map((n, i) => (
                  <GridRow key={n.name} $bg={i ? "#e4e4cc" : "#e0ffff"}>
                    <Cell $first><NodeIcon><NodeGlyph /></NodeIcon>{n.name}</Cell>
                    <Cell>Unknown</Cell>
                    <Cell>{n.pin}</Cell>
                    <Cell>{n.bank}</Cell>
                    <Cell>{n.vref}</Cell>
                    <Cell>2.5 V ...fault)</Cell>
                    <Cell />
                    <Cell>8mA (...ault)</Cell>
                    <Cell />
                    <Cell />
                  </GridRow>
                ))}
                <GridRow $bg="#fff">{headers.map((h, i) => <Cell key={h} $first={!i}>{i ? "" : "<<new node>>"}</Cell>)}</GridRow>
              </TableBox>
            </DockBody>
          </Dock>
        </Right>
      </Main>
      <Status><StatusCell $w={60} $line>0%</StatusCell><StatusCell $w={71}>00:00:00</StatusCell></Status>

      <Taskbar>
        <StartCell><svg width="24" height="24" viewBox="0 0 24 24" fill="#fff"><path d="M0 3.400L10 2v9.500H0zM11 1.800L24 0v11.500H11zM0 12.500h10V22L0 20.600zM11 12.500h13V24l-13-1.800z" /></svg></StartCell>
        <TaskSearch>
          <svg width="26" height="26" viewBox="0 0 26 26" fill="none" stroke="#fff" strokeWidth="1.500"><circle cx="16.500" cy="9" r="7.500" /><path d="M11 14.500L1 25" /></svg>
          <SearchLabel>Pesquisar</SearchLabel>
          <StudyArt />
        </TaskSearch>
        <AppCell $w={72}>
          <svg width="26" height="24" viewBox="0 0 26 24" fill="none" stroke="#fff" strokeWidth="1.400"><path d="M1 6h15v11H1zM1 0v3h15V0M1 24v-4h15v4M22 0v5M22 12v12" /><path d="M20.500 8.500h3" strokeWidth="3" /></svg>
        </AppCell>
        <AppCell $w={61} $ml={10} $run><Chrome /></AppCell>
        <AppCell $w={61} $ml={14} $run><Explorer /></AppCell>
        <AppCell $w={61} $ml={14}><Mail /></AppCell>
        <AppCell $w={61} $ml={14}><Firefox /></AppCell>
        <AppCell $w={61} $ml={14} $run><WhatsApp /></AppCell>
        <AppCell $w={66} $ml={9} $run $active><Quartus /></AppCell>
        <StackEdge />
        <Weather>
          <svg width="34" height="36" viewBox="0 0 34 36"><defs><linearGradient id="sun" x1=".3" y1="0" x2=".6" y2="1"><stop offset="0" stopColor="#f0b030" /><stop offset="1" stopColor="#f46c08" /></linearGradient></defs><circle cx="17" cy="19" r="15.500" fill="url(#sun)" /><circle cx="25" cy="9" r="9" fill="#c42b1c" /><text x="25" y="14" textAnchor="middle" fontSize="13" fill="#fff">1</text></svg>
          <WeatherText $w={46} $ml={12}>38°C</WeatherText><WeatherText $w={110} $ml={10} $ls={0.5}>Ensolarado</WeatherText>
        </Weather>
        <Tray>
          <Chevron dir="u" size={22} w={1} c="#fff" />
          <svg width="18" height="22" viewBox="0 0 18 22" fill="none" stroke="#fff" strokeWidth="1.300"><rect x="1" y="5" width="10" height="12" rx="2" /><path d="M11 10l5-3v8l-5-3M3 2c3-1.500 7-1.500 11 0M3 20c3 1.500 7 1.500 11 0" /></svg>
          <svg width="25" height="17" viewBox="0 0 25 17"><path d="M5 12C5-3 18-2 19 6l-8 8z" fill="#a8adb2" /><path d="M5 16c-7 0-6-9 1-9 5 0 5 3 7 2 4-4 12-1 12 4 0 2-2 3-3 3z" fill="#fff" /></svg>
          <svg width="25" height="14" viewBox="0 0 25 14"><rect x="1" y=".7" width="21" height="12.500" fill="none" stroke="#fff" strokeWidth="1.400" /><rect x="3" y="3" width="9" height="8" fill="#fff" /><rect x="23" y="4.500" width="2" height="5" fill="#fff" /></svg>
          <svg width="20" height="20" viewBox="0 0 20 20" fill="none" stroke="#dfe3e6" strokeWidth="1.300"><path d="M1 19C1 9 9 1 19 1M5.500 19c0-7.500 6-13.500 13.500-13.500M10 19c0-5 4-9 9-9M14 19c0-3 2-5 5-5" /><circle cx="17" cy="17" r="1.800" fill="#fff" stroke="none" /></svg>
          <svg width="22" height="20" viewBox="0 0 22 20" fill="none" stroke="#fff" strokeWidth="1.200"><path d="M1 6.500h4L10 1.500v17L5 13.500H1zM13 6.500l7 7M20 6.500l-7 7" /></svg>
        </Tray>
        <Clock>13:35<br />07/08/2023</Clock>
        <Notice><svg width="26" height="26" viewBox="0 0 26 26" fill="none" stroke="#fff" strokeWidth="1.500"><path d="M1 2h23v17h-7l-4.500 5-4.500-5H1z" /></svg></Notice>
      </Taskbar>
    </Screen>
  );
}
